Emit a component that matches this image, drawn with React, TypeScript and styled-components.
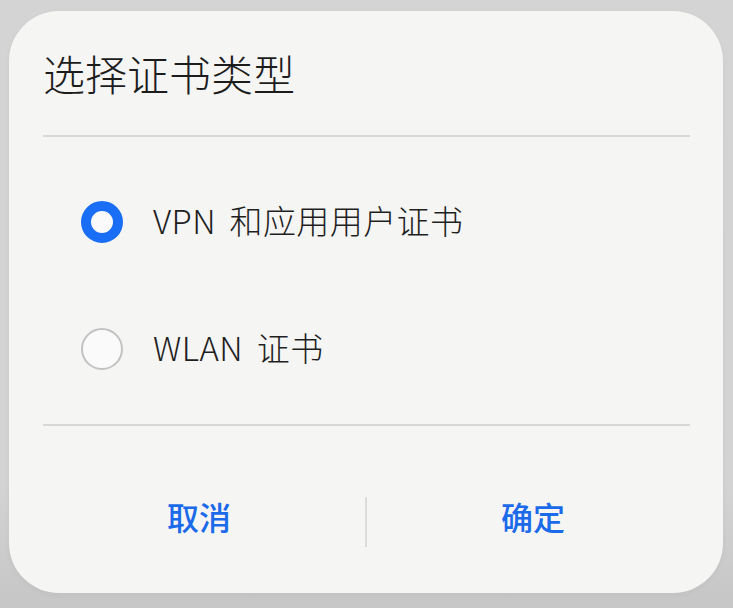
import React, { useState } from "react";
import styled, { createGlobalStyle } from "styled-components";

const Global = createGlobalStyle`
  html, body {
    margin: 0;
    padding: 0;
    background: linear-gradient(#d4d4d4 0%, #d3d3d3 80%, #c6c6c6 100%);
    min-height: 608px;
    font-family: "Noto Sans CJK SC", "Noto Sans", sans-serif;
  }
  #root { min-height: 608px; }
`;

const Screen = styled.div`
  width: 733px;
  height: 608px;
  padding: 11px 10px 15px 9px;
  box-sizing: border-box;
  display: flex;
`;

const Dialog = styled.div`
  flex: 1;
  background: #f5f5f4;
  border-radius: 50px;
  display: flex;
  flex-direction: column;
  box-shadow: 0 2px 6px rgba(0, 0, 0, 0.04);
`;

const Header = styled.div`
  height: 124px;
  padding: 0 34px;
  display: flex;
  align-items: center;
`;

const Title = styled.h1`
  margin: 0;
  font-size: 42px;
  font-weight: 300;
  color: #1c1c1c;
  line-height: 1;
`;

const Divider = styled.div`
  height: 2px;
  margin: 0 33px 0 34px;
  background: #d8d8d8;
`;

const List = styled.div`
  padding: 21px 34px 12px;
  display: flex;
  flex-direction: column;
`;

const Option = styled.label`
  height: 127px;
  display: flex;
  align-items: center;
  gap: 30px;
  padding-left: 38px;
  cursor: pointer;
`;

const Radio = styled.span<{ $on: boolean }>`
  width: 42px;
  height: 42px;
  box-sizing: border-box;
  border-radius: 50%;
  flex-shrink: 0;
  background: #fafafa;
  border: ${(p) => (p.$on ? "10.5px solid #1a6ef6" : "2px solid #c2c2c2")};
`;

const OptionText = styled.span`
  font-size: 33px;
  font-weight: 300;
  color: #1f1f1f;
  line-height: 1;
  letter-spacing: 0.4px;
  word-spacing: 6px;
  margin-top: -3px;
`;

const Footer = styled.div`
  flex: 1;
  padding: 25px 24px 0;
  display: flex;
  align-items: center;
`;

const Button = styled.button`
  flex: 1;
  height: 50px;
  border: 0;
  background: transparent;
  font-family: "Noto Sans CJK SC", sans-serif;
  font-size: 32px;
  font-weight: 500;
  color: #1a6ae9;
  padding: 0;
  margin-top: -12px;
  cursor: pointer;
`;

const VLine = styled.div`
  width: 2px;
  height: 50px;
  background: #dcdcdc;
`;

export default function App() {
  const [sel, setSel] = useState(0);
  const opts = ["VPN 和应用用户证书", "WLAN 证书"];
  return (
    <>
      <Global />
      <Screen>
        <Dialog>
          <Header>
            <Title>选择证书类型</Title>
          </Header>
          <Divider />
          <List>
            {opts.map((o, i) => (
              <Option key={o} onClick={() => setSel(i)}>
                <Radio $on={sel === i} />
                <OptionText>{o}</OptionText>
              </Option>
            ))}
          </List>
          <Divider />
          <Footer>
            <Button>取消</Button>
            <VLine />
            <Button>确定</Button>
          </Footer>
        </Dialog>
      </Screen>
    </>
  );
}
